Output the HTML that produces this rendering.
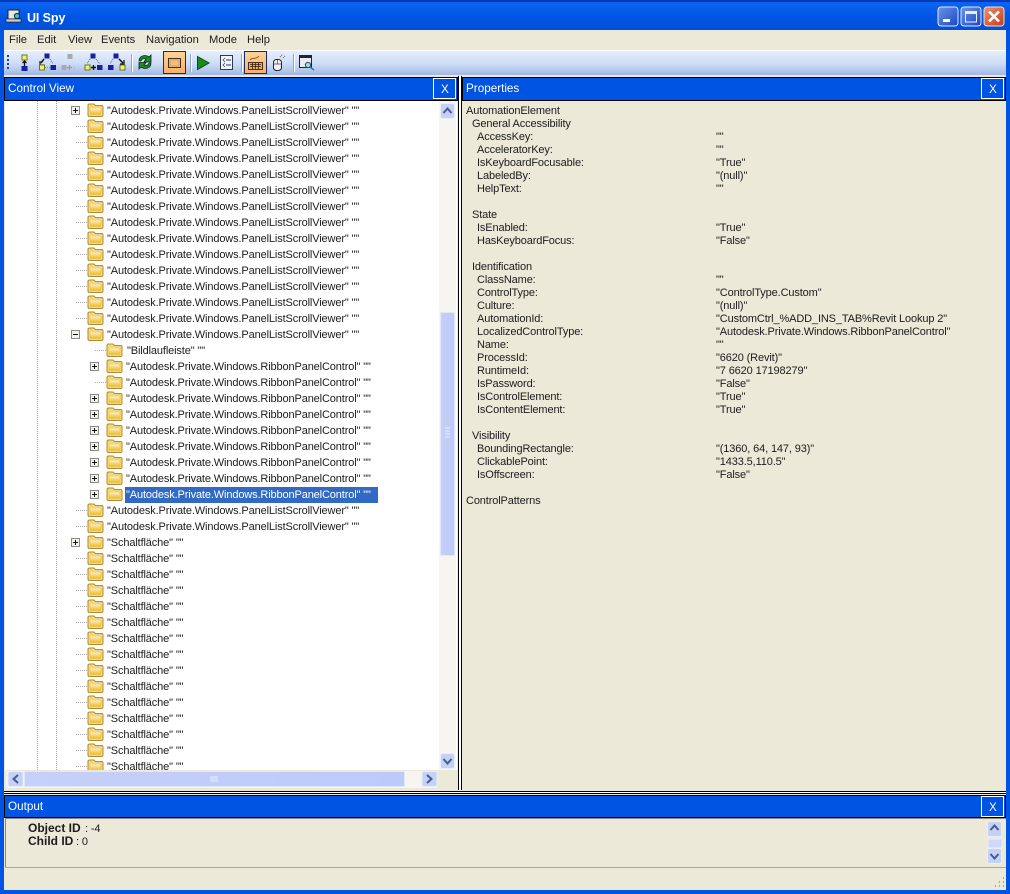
<!DOCTYPE html>
<html><head><meta charset="utf-8"><style>
html,body{margin:0;padding:0;background:#0054e3}
body{width:1010px;height:894px;overflow:hidden;position:relative;font-family:"Liberation Sans",sans-serif}
svg{position:absolute;left:0;top:0;display:block}
text{font-family:"Liberation Sans",sans-serif;font-size:11px;letter-spacing:-.13px;fill:#1c1c1c}
.h{font-size:11.7px;letter-spacing:0;fill:#fff}
.n{font-size:11.2px;letter-spacing:0}
</style></head><body>
<svg width="1010" height="894" viewBox="0 0 1010 894">
<defs>
<linearGradient id="tb" x1="0" y1="0" x2="0" y2="1"><stop offset="0" stop-color="#0a5ae6"/><stop offset=".12" stop-color="#0a64f0"/><stop offset=".6" stop-color="#0054e3"/><stop offset="1" stop-color="#0050d8"/></linearGradient>
<linearGradient id="tool" x1="0" y1="0" x2="0" y2="1"><stop offset="0" stop-color="#e8f0fc"/><stop offset=".55" stop-color="#cddcf6"/><stop offset="1" stop-color="#a2b8e4"/></linearGradient>
<linearGradient id="or" x1="0" y1="0" x2="0" y2="1"><stop offset="0" stop-color="#fcd49a"/><stop offset="1" stop-color="#f8b066"/></linearGradient>
<linearGradient id="fg" x1="0" y1="0" x2="0" y2="1"><stop offset="0" stop-color="#fff6cc"/><stop offset="1" stop-color="#eeb82c"/></linearGradient>
<linearGradient id="min" x1="0" y1="0" x2="1" y2="1"><stop offset="0" stop-color="#6c94ec"/><stop offset="1" stop-color="#1c46c0"/></linearGradient>
<linearGradient id="cl" x1="0" y1="0" x2="1" y2="1"><stop offset="0" stop-color="#ec9070"/><stop offset="1" stop-color="#c83c18"/></linearGradient>
<linearGradient id="sb" x1="0" y1="0" x2="1" y2="0"><stop offset="0" stop-color="#c6d0f8"/><stop offset="1" stop-color="#bccafa"/></linearGradient>
<symbol id="f" width="17" height="15" viewBox="0 0 17 15"><path d="M1 13V3.500Q1 2 2.500 2H7L8.500 3.500H14.500Q16 3.500 16 5V13Q16 14.500 14.500 14.500H2.500Q1 14.500 1 13Z" fill="#f4d878" stroke="#b08c2c"/><path d="M3 12.500V6H14V12.500Z" fill="url(#fg)" stroke="#e4c050" stroke-width=".6"/></symbol>
<symbol id="p" width="9" height="9" viewBox="0 0 9 9"><rect x=".5" y=".5" width="8" height="8" fill="#f4f4ee" stroke="#8a8a86"/><path d="M2 4.500H7M4.500 2V7" stroke="#111"/></symbol>
<symbol id="m" width="9" height="9" viewBox="0 0 9 9"><rect x=".5" y=".5" width="8" height="8" fill="#f4f4ee" stroke="#8a8a86"/><path d="M2 4.500H7" stroke="#111"/></symbol>
<symbol id="b" width="15" height="16" viewBox="0 0 15 16"><rect x=".5" y=".5" width="14" height="15" rx="2" fill="#c4d2f8" stroke="#e8eefc"/></symbol>
</defs>

<!-- window frame -->
<rect width="1010" height="894" fill="#0054e3"/>
<rect width="1010" height="30" fill="url(#tb)"/>
<rect y="0" width="1010" height="2" fill="#0838b8"/>
<!-- title icon -->
<rect x="8" y="10" width="11" height="9" fill="#e8e8e0" stroke="#222"/>
<rect x="6" y="19" width="15" height="3" fill="#cfcfc8" stroke="#222" stroke-width=".7"/>
<circle cx="17" cy="16" r="2.600" fill="#40b8d0" stroke="#103048"/>
<text x="27" y="22" style="font-size:12.500px;font-weight:bold;fill:#fff;letter-spacing:-.1px">UI Spy</text>
<!-- caption buttons -->
<rect x="938" y="7" width="20" height="19" rx="3" fill="url(#min)" stroke="#dfe8fc"/>
<rect x="943" y="19" width="7" height="3" fill="#fff"/>
<rect x="961" y="7" width="20" height="19" rx="3" fill="url(#min)" stroke="#dfe8fc"/>
<rect x="965.500" y="12" width="11" height="10" fill="none" stroke="#e8f0ff"/><rect x="965" y="11" width="12" height="3" fill="#e8f0ff"/>
<rect x="984" y="7" width="20" height="19" rx="3" fill="url(#cl)" stroke="#f0e0d8"/>
<path d="M989 11.500L999 21.500M999 11.500L989 21.500" stroke="#fff" stroke-width="2.600"/>

<!-- menu -->
<rect x="4" y="30" width="1002" height="860" fill="#ece9d8"/>
<text class="n" x="9" y="43">File</text><text class="n" x="37" y="43">Edit</text><text class="n" x="68" y="43">View</text><text class="n" x="101" y="43">Events</text><text class="n" x="146" y="43">Navigation</text><text class="n" x="209" y="43">Mode</text><text class="n" x="247" y="43">Help</text>

<!-- toolbar -->
<rect x="4" y="50" width="1002" height="25" fill="url(#tool)"/>
<rect x="4" y="50" width="1002" height="1" fill="#fff"/>
<path d="M8 55V70" stroke="#26408c" stroke-width="2" stroke-dasharray="2 2"/>
<!-- nav icons -->
<g>
<rect x="22" y="55" width="5" height="5" fill="#eef080" stroke="#6a7a10"/><path d="M24.500 61V66M22.500 63L24.500 61L26.500 63" stroke="#111" fill="none" stroke-width="1.300"/><rect x="21.500" y="66" width="6" height="5" fill="#1820a0"/>
<rect x="44.500" y="53.500" width="5" height="5" fill="#1820a0"/><path d="M44 59L41 63" stroke="#111" stroke-width="1.500"/><path d="M40 61V65H44" stroke="#111" fill="none" stroke-width="1.200"/><rect x="39.500" y="65" width="5" height="5" fill="#eef080" stroke="#6a7a10"/><path d="M50 59L53 64" stroke="#667" stroke-dasharray="1 1"/><rect x="50.500" y="65" width="5.500" height="5" fill="#1820a0"/><path d="M45 67.500H50" stroke="#889" stroke-dasharray="1 1"/>
<rect x="67.500" y="54" width="5" height="5" fill="#a8a8b0"/><rect x="61.500" y="65" width="5" height="5" fill="#a8a8b0"/><path d="M67 67.500H72M69.500 65V70" stroke="#9a9aa0" stroke-width="1.200"/><path d="M73 65L77 70H73Z" fill="#c0c4cc"/>
<rect x="90.500" y="53.500" width="5" height="5" fill="#1820a0"/><rect x="85" y="65" width="5" height="5" fill="#eef080" stroke="#6a7a10"/><path d="M91 67.500H96M93.500 65V70" stroke="#111" stroke-width="1.400"/><rect x="97" y="65" width="5.500" height="5" fill="#1820a0"/><path d="M90 59L87 64M96 59L100 64" stroke="#667" stroke-dasharray="1 1"/>
<rect x="113.500" y="53.500" width="5" height="5" fill="#1820a0"/><rect x="108" y="65" width="5.500" height="5" fill="#1820a0"/><rect x="120" y="65" width="5" height="5" fill="#eef080" stroke="#6a7a10"/><path d="M119 59L123 63" stroke="#111" stroke-width="1.500"/><path d="M124 60V64H120" stroke="#111" fill="none" stroke-width="1.200"/><path d="M113 59L110 64" stroke="#667" stroke-dasharray="1 1"/>
</g>
<path d="M131.500 54V72M190.500 54V72M241.500 54V72M293.500 54V72" stroke="#8ea6cc"/><path d="M132.500 54V72M191.500 54V72M242.500 54V72M294.500 54V72" stroke="#fff"/>
<!-- refresh -->
<path d="M139 61C139 56 145 54 149 57L151 55V62H144L146 59C143 58 142 59 141 61Z" fill="#1a8a2a" stroke="#0a2a10" stroke-width=".8"/><path d="M151 63C151 68 145 70 141 67L139 69V62.500H146L144 65C147 66 148 65 149 63Z" fill="#1a8a2a" stroke="#0a2a10" stroke-width=".8"/>
<!-- toggle 1 -->
<rect x="163.500" y="51.500" width="22" height="22" fill="url(#or)" stroke="#1a2a70"/><rect x="168.500" y="58.500" width="12" height="9" fill="#f4c080" stroke="#4a3018"/><rect x="170" y="60" width="9" height="6" fill="none" stroke="#b08850" stroke-width=".6"/>
<!-- play -->
<path d="M197.500 56.500L209 63L197.500 69.500Z" fill="#1a8a20" stroke="#0a4a10"/>
<!-- doc -->
<rect x="220.500" y="55.500" width="12" height="14" fill="#f0f4fc" stroke="#2a3a50"/><path d="M226 60H231M226 65H231" stroke="#2a3a50"/><path d="M225 58L223 60L225 62M225 63L223 65L225 67" stroke="#2a3a50" fill="none" stroke-width=".7"/>
<!-- keyboard toggle -->
<rect x="244.500" y="51.500" width="22" height="22" fill="url(#or)" stroke="#1a2a70"/><rect x="248.500" y="62.500" width="14" height="7" fill="#e4ac6c" stroke="#4a3018"/><path d="M250 64.500H261M250 66.500H261M252.500 63V69M255.500 63V69M258.500 63V69" stroke="#3a2410" stroke-width=".8"/><path d="M250 60C252 57 256 60 259 56" stroke="#7a5a30" fill="none"/>
<!-- mouse -->
<rect x="273.500" y="59.500" width="8" height="11" rx="3" fill="#f0f2f8" stroke="#222"/><path d="M277.500 60V64M274 64H281" stroke="#444" stroke-width=".7"/><path d="M280 57L283 54M283 58L285 56" stroke="#556" stroke-dasharray="1 1"/>
<!-- magnifier -->
<rect x="299.500" y="55.500" width="12" height="12" fill="#e8ecf4" stroke="#222"/><rect x="300" y="55" width="12" height="3" fill="#223"/><circle cx="308" cy="65" r="2.600" fill="#a8dce8" stroke="#2a4a5a"/><path d="M310 67L314 70" stroke="#108898" stroke-width="1.500"/>

<!-- control view pane -->
<rect x="4" y="76" width="454" height="714" fill="#ece9d8"/>
<rect x="4.500" y="77.500" width="453" height="23" fill="#0054e3" stroke="#000"/>
<text class="h" x="8" y="92">Control View</text>
<rect x="433.500" y="78.500" width="22" height="20" fill="#0054e3" stroke="#fff"/><text class="h" x="441" y="93">X</text>
<rect x="5" y="101" width="452" height="669" fill="#fff"/>
<!-- separators -->
<path d="M458.500 76V790M461.500 76V790" stroke="#000"/><path d="M459 76H461V790H459Z" fill="#fff"/>

<!-- tree lines -->
<path d="M37.500 101V770M56.500 101V770" stroke="#a8a8a8" stroke-dasharray="1 1" fill="none"/>
<path d="M76 126.500H87M76 142.500H87M76 158.500H87M76 174.500H87M76 190.500H87M76 206.500H87M76 222.500H87M76 238.500H87M76 254.500H87M76 270.500H87M76 286.500H87M76 302.500H87M76 318.500H87M76 510.500H87M76 526.500H87M76 558.500H87M76 574.500H87M76 590.500H87M76 606.500H87M76 622.500H87M76 638.500H87M76 654.500H87M76 670.500H87M76 686.500H87M76 702.500H87M76 718.500H87M76 734.500H87M76 750.500H87M76 766.500H87M95 350.500H106M95 382.500H106" stroke="#a8a8a8" stroke-dasharray="1 1"/>

<!-- folders level 1 -->
<use href="#f" x="87" y="102"/><use href="#f" x="87" y="118"/><use href="#f" x="87" y="134"/><use href="#f" x="87" y="150"/><use href="#f" x="87" y="166"/><use href="#f" x="87" y="182"/><use href="#f" x="87" y="198"/><use href="#f" x="87" y="214"/><use href="#f" x="87" y="230"/><use href="#f" x="87" y="246"/><use href="#f" x="87" y="262"/><use href="#f" x="87" y="278"/><use href="#f" x="87" y="294"/><use href="#f" x="87" y="310"/><use href="#f" x="87" y="326"/>
<use href="#f" x="87" y="502"/><use href="#f" x="87" y="518"/><use href="#f" x="87" y="534"/><use href="#f" x="87" y="550"/><use href="#f" x="87" y="566"/><use href="#f" x="87" y="582"/><use href="#f" x="87" y="598"/><use href="#f" x="87" y="614"/><use href="#f" x="87" y="630"/><use href="#f" x="87" y="646"/><use href="#f" x="87" y="662"/><use href="#f" x="87" y="678"/><use href="#f" x="87" y="694"/><use href="#f" x="87" y="710"/><use href="#f" x="87" y="726"/><use href="#f" x="87" y="742"/><use href="#f" x="87" y="758"/>
<!-- folders level 2 -->
<use href="#f" x="106" y="342"/><use href="#f" x="106" y="358"/><use href="#f" x="106" y="374"/><use href="#f" x="106" y="390"/><use href="#f" x="106" y="406"/><use href="#f" x="106" y="422"/><use href="#f" x="106" y="438"/><use href="#f" x="106" y="454"/><use href="#f" x="106" y="470"/><use href="#f" x="106" y="486"/>
<!-- expanders -->
<use href="#p" x="71" y="106"/><use href="#m" x="71" y="330"/><use href="#p" x="71" y="538"/>
<use href="#p" x="90" y="362"/><use href="#p" x="90" y="394"/><use href="#p" x="90" y="410"/><use href="#p" x="90" y="426"/><use href="#p" x="90" y="442"/><use href="#p" x="90" y="458"/><use href="#p" x="90" y="474"/><use href="#p" x="90" y="490"/>
<!-- selection -->
<rect x="125" y="487" width="253" height="16" fill="#316ac5"/>

<!-- tree text -->
<g>
<text x="107" y="114">"Autodesk.Private.Windows.PanelListScrollViewer" ""</text>
<text x="107" y="130">"Autodesk.Private.Windows.PanelListScrollViewer" ""</text>
<text x="107" y="146">"Autodesk.Private.Windows.PanelListScrollViewer" ""</text>
<text x="107" y="162">"Autodesk.Private.Windows.PanelListScrollViewer" ""</text>
<text x="107" y="178">"Autodesk.Private.Windows.PanelListScrollViewer" ""</text>
<text x="107" y="194">"Autodesk.Private.Windows.PanelListScrollViewer" ""</text>
<text x="107" y="210">"Autodesk.Private.Windows.PanelListScrollViewer" ""</text>
<text x="107" y="226">"Autodesk.Private.Windows.PanelListScrollViewer" ""</text>
<text x="107" y="242">"Autodesk.Private.Windows.PanelListScrollViewer" ""</text>
<text x="107" y="258">"Autodesk.Private.Windows.PanelListScrollViewer" ""</text>
<text x="107" y="274">"Autodesk.Private.Windows.PanelListScrollViewer" ""</text>
<text x="107" y="290">"Autodesk.Private.Windows.PanelListScrollViewer" ""</text>
<text x="107" y="306">"Autodesk.Private.Windows.PanelListScrollViewer" ""</text>
<text x="107" y="322">"Autodesk.Private.Windows.PanelListScrollViewer" ""</text>
<text x="107" y="338">"Autodesk.Private.Windows.PanelListScrollViewer" ""</text>
<text x="127" y="354">"Bildlaufleiste" ""</text>
<text x="126" y="370">"Autodesk.Private.Windows.RibbonPanelControl" ""</text>
<text x="126" y="386">"Autodesk.Private.Windows.RibbonPanelControl" ""</text>
<text x="126" y="402">"Autodesk.Private.Windows.RibbonPanelControl" ""</text>
<text x="126" y="418">"Autodesk.Private.Windows.RibbonPanelControl" ""</text>
<text x="126" y="434">"Autodesk.Private.Windows.RibbonPanelControl" ""</text>
<text x="126" y="450">"Autodesk.Private.Windows.RibbonPanelControl" ""</text>
<text x="126" y="466">"Autodesk.Private.Windows.RibbonPanelControl" ""</text>
<text x="126" y="482">"Autodesk.Private.Windows.RibbonPanelControl" ""</text>
<text x="126" y="498" style="fill:#fff">"Autodesk.Private.Windows.RibbonPanelControl" ""</text>
<text x="107" y="514">"Autodesk.Private.Windows.PanelListScrollViewer" ""</text>
<text x="107" y="530">"Autodesk.Private.Windows.PanelListScrollViewer" ""</text>
<text x="107" y="546">"Schaltfläche" ""</text>
<text x="107" y="562">"Schaltfläche" ""</text>
<text x="107" y="578">"Schaltfläche" ""</text>
<text x="107" y="594">"Schaltfläche" ""</text>
<text x="107" y="610">"Schaltfläche" ""</text>
<text x="107" y="626">"Schaltfläche" ""</text>
<text x="107" y="642">"Schaltfläche" ""</text>
<text x="107" y="658">"Schaltfläche" ""</text>
<text x="107" y="674">"Schaltfläche" ""</text>
<text x="107" y="690">"Schaltfläche" ""</text>
<text x="107" y="706">"Schaltfläche" ""</text>
<text x="107" y="722">"Schaltfläche" ""</text>
<text x="107" y="738">"Schaltfläche" ""</text>
<text x="107" y="754">"Schaltfläche" ""</text>
<text x="107" y="770">"Schaltfläche" ""</text>
</g>

<!-- vertical scrollbar -->
<rect x="439" y="101" width="17" height="669" fill="#f6f5ef"/>
<use href="#b" x="440" y="103"/><path d="M443.500 113L447.500 108.500L451.500 113" stroke="#4a5a90" stroke-width="2" fill="none"/>
<rect x="440.500" y="312.500" width="14" height="243" rx="1" fill="url(#sb)" stroke="#e0e6fc"/>
<path d="M445 428H450M445 431H450M445 434H450M445 437H450" stroke="#e8eefc"/>
<use href="#b" x="440" y="753"/><path d="M443.500 759L447.500 763.500L451.500 759" stroke="#4a5a90" stroke-width="2" fill="none"/>
<!-- horizontal scrollbar -->
<rect x="5" y="770" width="452" height="19" fill="#ece9d8"/>
<rect x="6" y="771" width="431" height="17" fill="#f6f5ef"/>
<rect x="8" y="771.500" width="15" height="15" rx="2" fill="#c4d2f8" stroke="#e8eefc"/><path d="M18 775L13.500 779L18 783" stroke="#4a5a90" stroke-width="2" fill="none"/>
<rect x="24.500" y="771.500" width="380" height="15" rx="1" fill="url(#sb)" stroke="#e0e6fc"/>
<path d="M211 776V782M213 776V782M215 776V782M217 776V782" stroke="#e8eefc"/>
<rect x="422" y="771.500" width="15" height="15" rx="2" fill="#c4d2f8" stroke="#e8eefc"/><path d="M427 775L431.500 779L427 783" stroke="#4a5a90" stroke-width="2" fill="none"/>

<!-- properties pane -->
<rect x="462.500" y="77.500" width="543" height="23" fill="#0054e3" stroke="#000"/>
<text class="h" x="466" y="92">Properties</text>
<rect x="981.500" y="78.500" width="22" height="20" fill="#0054e3" stroke="#fff"/><text class="h" x="989" y="93">X</text>
<rect x="463" y="101" width="542" height="688" fill="#ece9d8"/>
<g>
<text x="466" y="114">AutomationElement</text>
<text x="472" y="127">General Accessibility</text>
<text x="477" y="140">AccessKey:</text><text x="716" y="140">""</text>
<text x="477" y="153">AcceleratorKey:</text><text x="716" y="153">""</text>
<text x="477" y="166">IsKeyboardFocusable:</text><text x="716" y="166">"True"</text>
<text x="477" y="179">LabeledBy:</text><text x="716" y="179">"(null)"</text>
<text x="477" y="192">HelpText:</text><text x="716" y="192">""</text>
<text x="472" y="218">State</text>
<text x="477" y="231">IsEnabled:</text><text x="716" y="231">"True"</text>
<text x="477" y="244">HasKeyboardFocus:</text><text x="716" y="244">"False"</text>
<text x="472" y="270">Identification</text>
<text x="477" y="283">ClassName:</text><text x="716" y="283">""</text>
<text x="477" y="296">ControlType:</text><text x="716" y="296">"ControlType.Custom"</text>
<text x="477" y="309">Culture:</text><text x="716" y="309">"(null)"</text>
<text x="477" y="322">AutomationId:</text><text x="716" y="322">"CustomCtrl_%ADD_INS_TAB%Revit Lookup 2"</text>
<text x="477" y="335">LocalizedControlType:</text><text x="716" y="335">"Autodesk.Private.Windows.RibbonPanelControl"</text>
<text x="477" y="348">Name:</text><text x="716" y="348">""</text>
<text x="477" y="361">ProcessId:</text><text x="716" y="361">"6620 (Revit)"</text>
<text x="477" y="374">RuntimeId:</text><text x="716" y="374">"7 6620 17198279"</text>
<text x="477" y="387">IsPassword:</text><text x="716" y="387">"False"</text>
<text x="477" y="400">IsControlElement:</text><text x="716" y="400">"True"</text>
<text x="477" y="413">IsContentElement:</text><text x="716" y="413">"True"</text>
<text x="472" y="439">Visibility</text>
<text x="477" y="452">BoundingRectangle:</text><text x="716" y="452">"(1360, 64, 147, 93)"</text>
<text x="477" y="465">ClickablePoint:</text><text x="716" y="465">"1433.5,110.5"</text>
<text x="477" y="478">IsOffscreen:</text><text x="716" y="478">"False"</text>
<text x="466" y="504">ControlPatterns</text>
</g>

<!-- output pane -->
<path d="M4 791.500H1006M4 793.500H1006" stroke="#000"/><path d="M4 792.500H1006" stroke="#fff"/>
<rect x="4.500" y="795.500" width="1001" height="22" fill="#0054e3" stroke="#000"/>
<text class="h" x="8" y="810">Output</text>
<rect x="981.500" y="796.500" width="22" height="20" fill="#0054e3" stroke="#fff"/><text class="h" x="989" y="811">X</text>
<rect x="5" y="818" width="1001" height="49" fill="#ece9d8"/>
<path d="M5.500 818V867" stroke="#8a8a80"/><path d="M5 867.500H1006" stroke="#aca899"/><path d="M5 818.500H1006" stroke="#8a8a80"/>
<text x="28" y="832" style="font-weight:bold;font-size:12px;letter-spacing:0">Object ID</text><text x="85" y="832">: -4</text>
<text x="28" y="845" style="font-weight:bold;font-size:12px;letter-spacing:0">Child ID</text><text x="76" y="845">: 0</text>
<use href="#b" x="987" y="821"/><path d="M990.500 830L994.500 825.500L998.500 830" stroke="#4a5a90" stroke-width="2" fill="none"/>
<rect x="988" y="839" width="14" height="9" fill="#d0d8f8" stroke="#e8eefc"/>
<use href="#b" x="987" y="848"/><path d="M990.500 854L994.500 858.500L998.500 854" stroke="#4a5a90" stroke-width="2" fill="none"/>
<!-- status -->
<rect x="4" y="868" width="1002" height="22" fill="#ece9d8"/>
<path d="M1003 878h1M999 882h1M1003 882h1M995 886h1M999 886h1M1003 886h1" stroke="#aca899" stroke-width="2"/>
</svg>
</body></html>
